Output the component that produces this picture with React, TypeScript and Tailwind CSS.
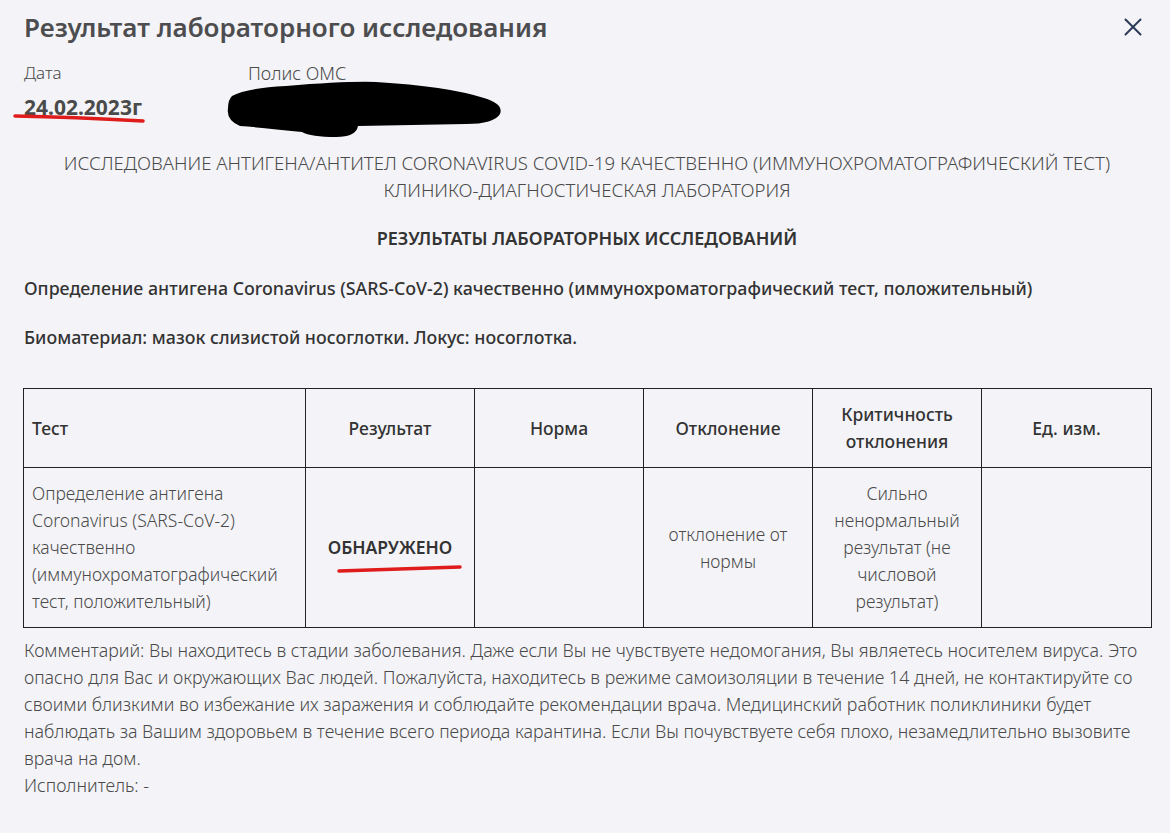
import { X } from "lucide-react";

const columns = ["Тест", "Результат", "Норма", "Отклонение", "Критичность отклонения", "Ед. изм."];

export default function App() {
  return (
    <main
      className="min-h-screen bg-[#f4f4f8] pl-6 pr-5 pt-[10px] text-[#3b3b3b]"
      style={{ fontFamily: '"Noto Sans", "Open Sans", sans-serif' }}
    >
      <header className="flex items-center justify-between">
        <h1 className="text-[26px] font-semibold leading-[34px] text-[#4d4d4f]">
          Результат лабораторного исследования
        </h1>
        <button className="mr-[2px] text-[#2b3859]">
          <X size={30} strokeWidth={1.6} />
        </button>
      </header>

      <section className="mt-[17px] flex text-[17px] font-light">
        <div className="w-[224px]">
          <p className="leading-[24px] text-[#4a4a4a]">Дата</p>
          <div className="relative mt-[7px] inline-block">
            <span className="text-[21px] font-bold leading-[30px] text-[#4a4a4a]">24.02.2023г</span>
            <svg className="absolute left-[-11px] top-[20px]" width="134" height="12" viewBox="0 0 134 12">
              <path d="M2 4 Q60 5 130 9" stroke="#e01b1b" strokeWidth="3.5" strokeLinecap="round" fill="none" />
            </svg>
          </div>
        </div>
        <div className="relative">
          <p className="text-[18px] leading-[24px] text-[#4a4a4a]">Полис ОМС</p>
          <svg className="absolute left-[-22px] top-[19px]" width="280" height="60" viewBox="0 0 280 60">
            <path
              d="M6 16 Q20 8 60 6 Q120 1 150 2 Q220 6 258 18 Q278 24 274 34 Q268 44 240 44 L132 46 Q130 57 110 57 Q85 57 76 52 Q40 48 14 46 Q0 40 2 28 Q2 20 6 16 Z"
              fill="#000"
            />
          </svg>
        </div>
      </section>

      <section className="mt-[27px] text-center uppercase leading-[27px] text-[#4a4a4a]">
        <p className="text-[18.6px] font-light">
          Исследование антигена/антител Coronavirus COVID-19 качественно (иммунохроматографический тест)
        </p>
        <p className="text-[18.6px] font-light">Клинико-диагностическая лаборатория</p>
        <p className="mt-[22px] text-[18px] font-semibold text-[#333]">Результаты лабораторных исследований</p>
      </section>

      <p className="mt-[23px] text-[17.8px] font-medium leading-[27px] text-[#333]">
        Определение антигена Coronavirus (SARS-CoV-2) качественно (иммунохроматографический тест, положительный)
      </p>
      <p className="mt-[22px] text-[17.8px] font-medium leading-[27px] text-[#333]">
        Биоматериал: мазок слизистой носоглотки. Локус: носоглотка.
      </p>

      <table className="ml-[-1px] mt-[37px] w-[1128px] table-fixed border-collapse text-[17.5px] leading-[27px]">
        <colgroup>
          <col className="w-[282px]" />
          <col className="w-[169px]" />
          <col className="w-[169px]" />
          <col className="w-[169px]" />
          <col className="w-[169px]" />
          <col className="w-[170px]" />
        </colgroup>
        <thead>
          <tr className="h-[79px]">
            {columns.map((c, i) => (
              <th
                key={c}
                className={`border border-[#222] px-2 font-medium text-[#333] ${i === 0 ? "text-left" : "text-center"}`}
              >
                {c === "Критичность отклонения" ? (
                  <>
                    Критичность
                    <br />
                    отклонения
                  </>
                ) : (
                  c
                )}
              </th>
            ))}
          </tr>
        </thead>
        <tbody className="font-light text-[#4a4a4a]">
          <tr className="h-[160px]">
            <td className="border border-[#222] px-2">
              Определение антигена Coronavirus (SARS-CoV-2) качественно (иммунохроматографический тест, положительный)
            </td>
            <td className="border border-[#222] px-2 text-center">
              <span className="relative inline-block font-semibold text-[#333]">
                ОБНАРУЖЕНО
                <svg className="absolute left-[8px] top-[30px]" width="130" height="10" viewBox="0 0 130 10">
                  <path d="M3 7 Q60 5 124 3" stroke="#e01b1b" strokeWidth="3.5" strokeLinecap="round" fill="none" />
                </svg>
              </span>
            </td>
            <td className="border border-[#222] px-2" />
            <td className="border border-[#222] px-2 text-center">отклонение от нормы</td>
            <td className="border border-[#222] px-3 text-center">
              Сильно ненормальный результат (не числовой результат)
            </td>
            <td className="border border-[#222] px-2" />
          </tr>
        </tbody>
      </table>

      <section className="mt-[9px] text-[17.8px] font-light leading-[27px] text-[#4a4a4a]">
        <p>
          Комментарий: Вы находитесь в стадии заболевания. Даже если Вы не чувствуете недомогания, Вы являетесь
          носителем вируса. Это опасно для Вас и окружающих Вас людей. Пожалуйста, находитесь в режиме самоизоляции в
          течение 14 дней, не контактируйте со своими близкими во избежание их заражения и соблюдайте рекомендации
          врача. Медицинский работник поликлиники будет наблюдать за Вашим здоровьем в течение всего периода
          карантина. Если Вы почувствуете себя плохо, незамедлительно вызовите врача на дом.
        </p>
        <p>Исполнитель: -</p>
      </section>
    </main>
  );
}
